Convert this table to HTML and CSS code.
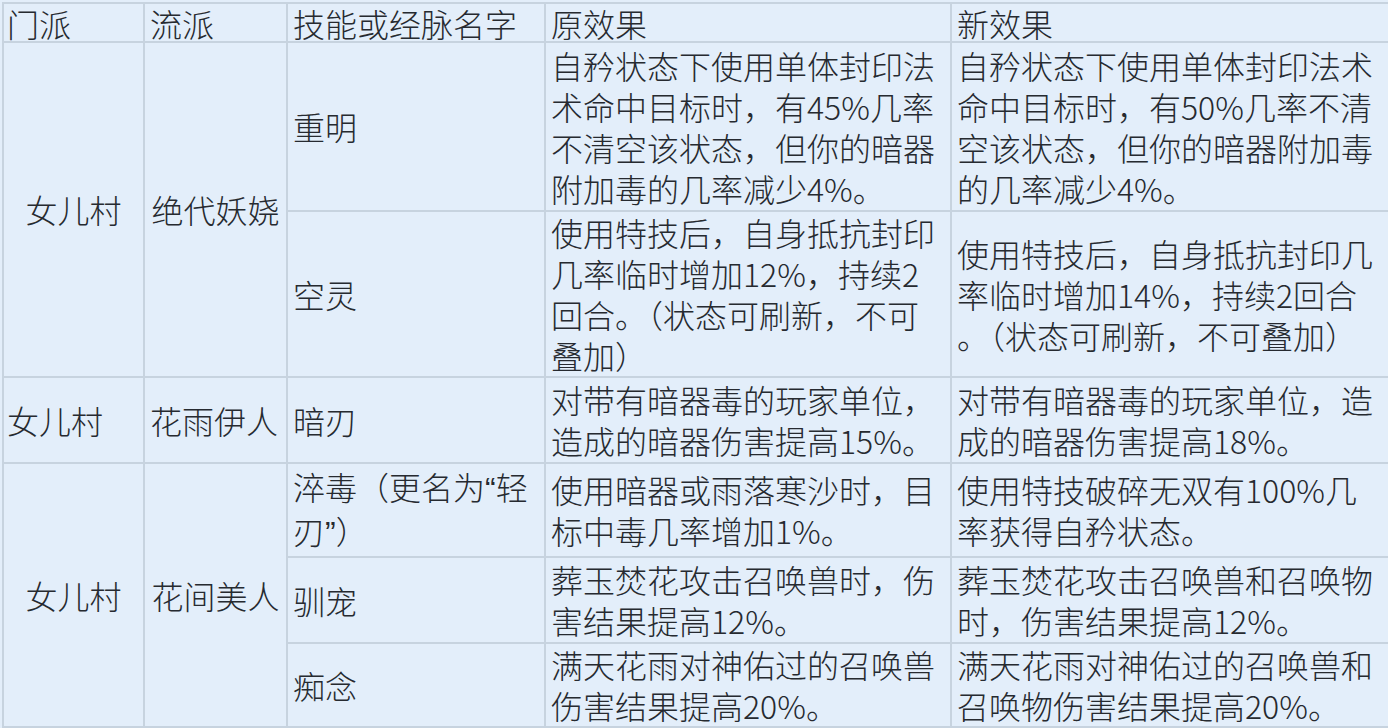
FILE: index.html
```html
<!DOCTYPE html>
<html lang="zh-CN">
<head>
<meta charset="utf-8">
<title>门派技能调整</title>
<link rel="stylesheet" href="styles.css">
</head>
<body>
<table class="grid">
  <colgroup>
    <col class="c1"><col class="c2"><col class="c3"><col class="c4"><col class="c5">
  </colgroup>
  <tr class="head">
    <td class="first">门派</td><td>流派</td><td>技能或经脉名字</td><td>原效果</td><td>新效果</td>
  </tr>
  <tr class="r1">
    <td rowspan="2" class="center">女儿村</td>
    <td rowspan="2" class="center">绝代妖娆</td>
    <td>重明</td>
    <td>自矜状态下使用单体封印法<br>术命中目标时，有45%几率<br>不清空该状态，但你的暗器<br>附加毒的几率减少4%。</td>
    <td>自矜状态下使用单体封印法术<br>命中目标时，有50%几率不清<br>空该状态，但你的暗器附加毒<br>的几率减少4%。</td>
  </tr>
  <tr class="r2">
    <td>空灵</td>
    <td>使用特技后，自身抵抗封印<br>几率临时增加12%，持续2<br>回合。（状态可刷新，不可<br>叠加）</td>
    <td>使用特技后，自身抵抗封印几<br>率临时增加14%，持续2回合<br>。（状态可刷新，不可叠加）</td>
  </tr>
  <tr class="r3">
    <td class="first">女儿村</td>
    <td>花雨伊人</td>
    <td>暗刃</td>
    <td>对带有暗器毒的玩家单位，<br>造成的暗器伤害提高15%。</td>
    <td>对带有暗器毒的玩家单位，造<br>成的暗器伤害提高18%。</td>
  </tr>
  <tr class="r4">
    <td rowspan="3" class="center">女儿村</td>
    <td rowspan="3" class="center">花间美人</td>
    <td>淬毒（更名为<span class="q">“</span>轻<br>刃<span class="q">”</span>）</td>
    <td>使用暗器或雨落寒沙时，目<br>标中毒几率增加1%。</td>
    <td>使用特技破碎无双有100%几<br>率获得自矜状态。</td>
  </tr>
  <tr class="r5">
    <td>驯宠</td>
    <td>葬玉焚花攻击召唤兽时，伤<br>害结果提高12%。</td>
    <td>葬玉焚花攻击召唤兽和召唤物<br>时，伤害结果提高12%。</td>
  </tr>
  <tr class="r6">
    <td>痴念</td>
    <td>满天花雨对神佑过的召唤兽<br>伤害结果提高20%。</td>
    <td>满天花雨对神佑过的召唤兽和<br>召唤物伤害结果提高20%。</td>
  </tr>
</table>
</body>
</html>
```
FILE: styles.css
```css
html, body {
  margin: 0;
  padding: 0;
  background: #e3eefa;
  overflow: hidden;
}
body {
  width: 1388px;
  height: 728px;
}
.grid {
  margin: 2px 0 0 2px;
  border-collapse: collapse;
  table-layout: fixed;
  width: 1400px;
  font-family: "Noto Sans CJK SC", "Noto Sans", sans-serif;
  font-size: 32px;
  font-weight: 300;
  line-height: 41px;
  color: #262a30;
  background: #e3eefa;
}
.c1 { width: 141px; }
.c2 { width: 143px; }
.c3 { width: 258px; }
.c4 { width: 406px; }
.c5 { width: 452px; }
.grid td {
  border: 2px solid #c7d3df;
  padding: 0 5px;
  vertical-align: middle;
  white-space: nowrap;
  text-align: left;
}
.grid td.first {
  padding-left: 3px;
}
.grid td.center {
  text-align: center;
}
.head { height: 39px; }
.head td { line-height: 36px; padding-top: 1px; }
.r1 { height: 169px; }
.r2 { height: 162px; }
.r3 { height: 86px; }
.r4 { height: 94px; }
.r5 { height: 86px; }
.r6 { height: 83px; }
.q {
  font-family: "Liberation Sans", sans-serif;
}
```
